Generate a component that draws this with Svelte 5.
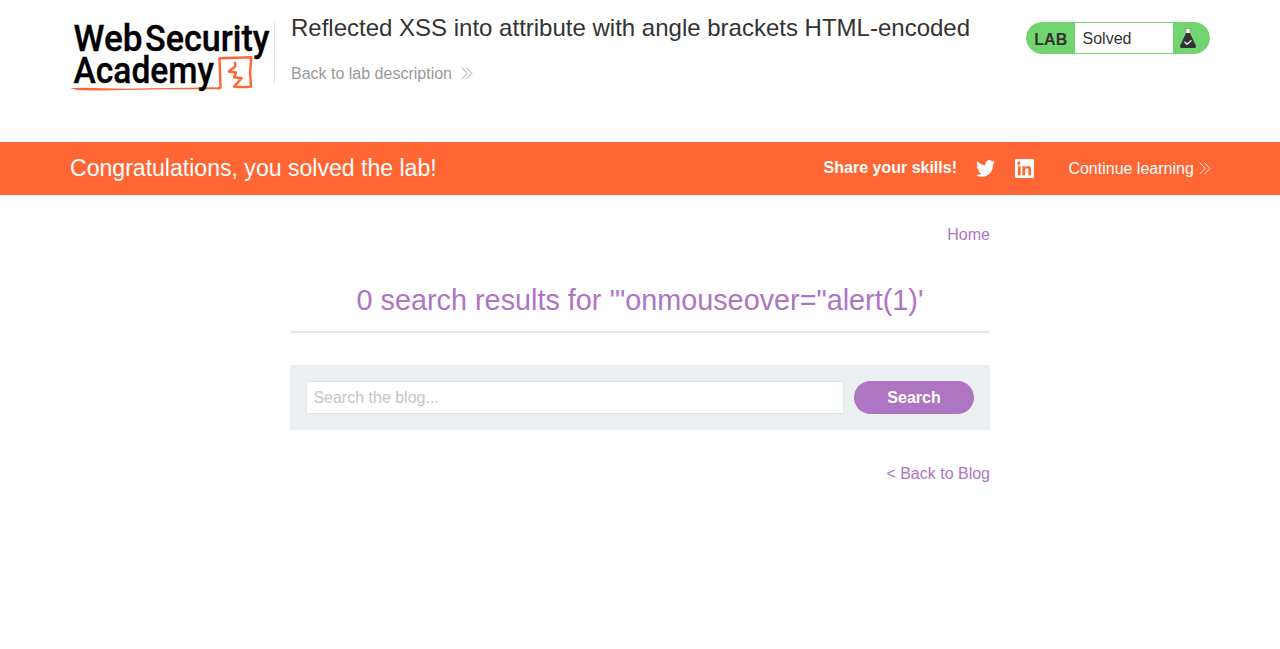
<script>
  let query = $state('');
</script>

{#snippet chevrons()}
  <svg class="chevrons" width="12" height="13" viewBox="0 0 12 13" aria-hidden="true">
    <path d="M.6.6 6.1 6.4.6 12.2M5.4.6l5.5 5.8-5.5 5.8" fill="none" stroke="currentColor" stroke-width=".9" />
  </svg>
{/snippet}

<header>
  <svg class="logo" width="202" height="74" viewBox="0 0 202 74" role="img" aria-label="Web Security Academy">
    <path d="M0 66.600Q3 65.300 30 66.200T80 66.200L149 65.200V67.200L90 67.300Q30 69.200 8 68Z" fill="#ff6633" />
    <path d="M148 66.200 150.500 65.800 149.500 36.200 181.300 35.200 180.100 50 181 64.600Q172 65.600 164 64.600L171.700 56.200 164 55.300 166 50.500 158.700 49.500 165.200 44.500 165 39.700" fill="none" stroke="#ff6633" stroke-width="2.400" stroke-linejoin="round" />
    <text class="web" x="3.500" y="28.700" textLength="69" lengthAdjust="spacingAndGlyphs">Web</text>
    <text class="web" x="75" y="28.700" textLength="124.500" lengthAdjust="spacingAndGlyphs">Security</text>
    <text class="web" x="3.500" y="60.700" textLength="140.500" lengthAdjust="spacingAndGlyphs">Academy</text>
  </svg>
  <div class="title">
    <h2>Reflected XSS into attribute with angle brackets HTML-encoded</h2>
    <a class="lab-link" href="#lab"><span>Back to lab description</span>{@render chevrons()}</a>
  </div>
  <div class="status">
    <b>LAB</b>
    <p>Solved</p>
    <svg width="36" height="30" viewBox="0 0 36 30" aria-hidden="true">
      <path d="M13 5.500v5.500h4V5.500" fill="#fff" />
      <path d="M11.500 5.500h7M13 5.500V11M17 5.500V11" fill="none" stroke="#8b938b" stroke-width=".7" />
      <path d="M13.100 10h3.800l5.900 12.600q.8 2.400-1.600 2.400H8.800q-2.400 0-1.600-2.400z" fill="#333332" />
      <path d="m11.500 18.800 2.500 2.500 4.500-4" fill="none" stroke="#eee" stroke-width="1.300" />
    </svg>
  </div>
</header>

<section class="banner">
  <div class="inner">
    <h4>Congratulations, you solved the lab!</h4>
    <b class="share">Share your skills!</b>
    <a class="twitter" href="#twitter" aria-label="Twitter">
      <svg width="19" height="17" viewBox="0 2 24 20" preserveAspectRatio="none"><path fill="#fff" d="M23.954 4.569a10 10 0 0 1-2.825.775 4.958 4.958 0 0 0 2.163-2.723c-.951.555-2.005.959-3.127 1.184a4.920 4.920 0 0 0-8.384 4.482C7.691 8.094 4.066 6.130 1.640 3.161a4.822 4.822 0 0 0-.666 2.475c0 1.710.87 3.213 2.188 4.096a4.904 4.904 0 0 1-2.228-.616v.061a4.923 4.923 0 0 0 3.946 4.827 4.996 4.996 0 0 1-2.212.085 4.937 4.937 0 0 0 4.604 3.417 9.868 9.868 0 0 1-6.102 2.105c-.39 0-.779-.023-1.170-.067a13.995 13.995 0 0 0 7.557 2.209c9.054 0 13.999-7.496 13.999-13.986 0-.209 0-.42-.015-.63a9.936 9.936 0 0 0 2.460-2.548z" /></svg>
    </a>
    <a class="linkedin" href="#linkedin" aria-label="LinkedIn">
      <svg width="19" height="19" viewBox="0 0 24 24"><path fill="#fff" d="M22.200 0H1.800C.8 0 0 .8 0 1.700v20.600C0 23.200.8 24 1.800 24h20.400c1 0 1.800-.8 1.800-1.700V1.700C24 .8 23.200 0 22.200 0zM7.100 20.400H3.600V9h3.500zM5.300 7.400a2.100 2.100 0 1 1 0-4.100 2.100 2.100 0 0 1 0 4.100zm15.100 13h-3.500v-5.600c0-1.300 0-3-1.900-3s-2.100 1.400-2.100 2.900v5.700H9.300V9h3.400v1.600c.5-.9 1.600-1.900 3.400-1.900 3.600 0 4.300 2.400 4.300 5.500z" /></svg>
    </a>
    <a class="continue" href="#continue"><span>Continue learning</span>{@render chevrons()}</a>
  </div>
</section>

<main>
  <nav><a href="#home">Home</a></nav>
  <h1>0 search results for '"onmouseover="alert(1)'</h1>
  <form onsubmit={(e) => e.preventDefault()}>
    <input type="text" placeholder="Search the blog..." bind:value={query} />
    <button type="submit">Search</button>
  </form>
  <div class="back"><a href="#blog">&lt; Back to Blog</a></div>
</main>

<style>
  :global(body) {
    margin: 0;
    background: #fff;
    color: #333332;
    font: 16px/24px "Liberation Sans", Arial, sans-serif;
  }
  a { text-decoration: none; }
  h1, h2, h4, p { margin: 0; font-weight: 400; }
  svg { display: block; }
  header, .inner {
    width: 1140px;
    margin: 0 auto;
    display: flex;
    box-sizing: border-box;
  }
  header { height: 142px; align-items: flex-start; }
  .logo { margin-top: 22px; overflow: visible; flex: none; }
  .web { font: 500 37.500px Roboto, sans-serif; fill: #000; stroke: #000; stroke-width: .35; }
  .title {
    position: relative;
    margin-left: 2px;
    padding: 12px 0 0 17px;
    height: 72px;
    white-space: nowrap;
  }
  .title::before {
    content: "";
    position: absolute;
    left: 0;
    top: 22px;
    width: 1px;
    height: 62px;
    background: #e5e5e5;
  }
  h2 { font-size: 24px; line-height: 32px; }
  .lab-link { display: flex; align-items: center; gap: 9px; margin-top: 18px; color: #999; }
  .lab-link .chevrons { margin-top: -2px; }
  .status {
    display: flex;
    box-sizing: border-box;
    width: 184px;
    height: 32px;
    margin: 22px 0 0 auto;
    border: 1px solid #72d46f;
    border-radius: 16px;
    background: #72d46f;
    overflow: hidden;
    line-height: 32px;
  }
  .status b { width: 48px; padding-left: 7.300px; box-sizing: border-box; line-height: 34px; }
  .status p { width: 98px; padding-left: 7.500px; box-sizing: border-box; background: #fff; }
  .banner { background: #ff6633; color: #fff; height: 53px; }
  .banner a { color: #fff; }
  .inner { height: 53px; align-items: center; }
  h4 { font-size: 23.070px; padding-bottom: 2px; }
  .share { margin-left: auto; padding-bottom: 2px; }
  .twitter { margin-left: 19px; }
  .linkedin { margin-left: 20px; }
  .continue { display: flex; align-items: center; gap: 5px; margin: 0 -.8px 0 34.400px; }
  main { width: 700px; margin: 0 auto; }
  main a { color: #ae75c2; }
  nav { padding-top: 28px; text-align: right; }
  h1 {
    height: 86px;
    box-sizing: border-box;
    padding-top: 35px;
    border-bottom: 2px solid #e5e5e5;
    margin-bottom: 32px;
    color: #ae75c2;
    font-size: 28.800px;
    line-height: 36px;
    text-align: center;
    white-space: nowrap;
  }
  form { display: flex; gap: 10px; padding: 16px; background: #eaeff2; }
  input {
    flex: 1;
    min-width: 0;
    height: 33px;
    box-sizing: border-box;
    padding: 0 6.400px;
    border: 1px solid #e1e5e7;
    border-radius: 0;
    background: #fff;
    color: #333332;
    font: inherit;
  }
  input::placeholder { color: #c5c5c5; opacity: 1; }
  button {
    width: 120px;
    height: 33px;
    padding: 0;
    border: 0;
    border-radius: 17px;
    background: #ae75c2;
    color: #fff;
    font: bold 16px "Liberation Sans", Arial, sans-serif;
  }
  .back { margin-top: 32px; text-align: right; }
</style>
